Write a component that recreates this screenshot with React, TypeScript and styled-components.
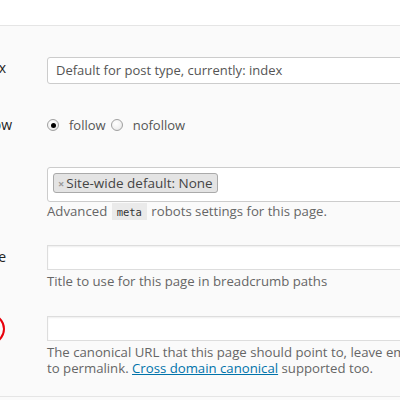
import React from "react";
import styled, { createGlobalStyle } from "styled-components";

const GlobalStyle = createGlobalStyle`
  html, body { margin: 0; padding: 0; }
  body {
    background: #fafafa;
    font-family: "Open Sans", "Noto Sans", sans-serif;
    color: #444;
    overflow: hidden;
  }
`;

const Page = styled.div`
  width: 400px;
  height: 400px;
  overflow: hidden;
  position: relative;
  background: #fafafa;
`;

const TopBar = styled.div`
  height: 25px;
  background: #fff;
  border-bottom: 1px solid #e5e5e5;
`;

const Table = styled.div`
  display: flex;
  flex-direction: column;
  padding-top: 31px;
  height: 339px;
  border-bottom: 1px solid #e5e5e5;
`;

const Row = styled.div<{ $mt?: number }>`
  display: grid;
  grid-template-columns: 47px 1fr;
  margin-top: ${(p) => p.$mt ?? 0}px;
  position: relative;
`;

const LabelCell = styled.div`
  position: relative;
  overflow: visible;
`;

const Label = styled.label<{ $end: number; $top: number }>`
  display: block;
  width: 200px;
  margin-left: ${(p) => p.$end - 200}px;
  margin-top: ${(p) => p.$top}px;
  text-align: right;
  white-space: nowrap;
  font-size: 14px;
  font-weight: 400;
  color: #222;
  line-height: 18px;
`;

const Field = styled.div`
  display: flex;
  flex-direction: column;
  min-width: 0;
`;

const Select = styled.div`
  box-sizing: border-box;
  width: 420px;
  height: 27px;
  border: 1px solid #ccc;
  border-radius: 3px;
  background: #fff;
  padding: 0 8px;
  font-size: 13px;
  line-height: 25px;
  color: #555;
  white-space: nowrap;
`;

const RadioGroup = styled.div`
  display: flex;
  align-items: center;
  height: 20px;
  font-size: 13px;
  color: #555;
`;

const Radio = styled.span<{ $checked?: boolean }>`
  box-sizing: border-box;
  width: 12px;
  height: 12px;
  border-radius: 50%;
  border: 1px solid #a0a0a0;
  background: radial-gradient(circle at 40% 35%, #fff 0%, #f0f0f0 60%, #d8d8d8 100%);
  display: inline-flex;
  align-items: center;
  justify-content: center;
  margin-right: 10px;
  &::after {
    content: "";
    display: ${(p) => (p.$checked ? "block" : "none")};
    width: 5px;
    height: 5px;
    border-radius: 50%;
    background: #000;
  }
`;

const RadioLabel = styled.span`
  margin-right: 5px;
`;

const MultiBox = styled.div`
  box-sizing: border-box;
  width: 420px;
  height: 35px;
  border: 1px solid #ccc;
  border-radius: 3px;
  background: #fff;
  padding: 5px 5px;
  display: flex;
  align-items: flex-start;
`;

const Tag = styled.span`
  box-sizing: border-box;
  display: inline-flex;
  align-items: center;
  height: 20px;
  padding: 0 4px 0 4px;
  border: 1px solid #aaa;
  border-radius: 3px;
  background: #e4e4e4;
  font-size: 13.5px;
  color: #444;
  white-space: nowrap;
`;

const TagX = styled.span`
  color: #999;
  font-size: 11px;
  font-weight: 700;
  margin-right: 2px;
`;

const Desc = styled.p<{ $mt?: number }>`
  margin: ${(p) => p.$mt ?? 2}px 0 0;
  font-size: 13.2px;
  line-height: 16px;
  color: #666;
  white-space: nowrap;
`;

const Code = styled.code`
  font-family: "DejaVu Sans Mono", "Liberation Mono", monospace;
  font-size: 10.5px;
  background: #eaeaea;
  padding: 3px 5px 2px;
  margin: 0 1px;
  color: #333;
`;

const TextInput = styled.div`
  box-sizing: border-box;
  width: 420px;
  height: 25px;
  border: 1px solid #ddd;
  background: #fff;
  box-shadow: inset 0 1px 2px rgba(0, 0, 0, 0.07);
`;

const Link = styled.a`
  color: #0073aa;
  text-decoration: underline;
`;

const Circle = styled.svg`
  position: absolute;
  left: -40px;
  top: -7px;
  overflow: visible;
`;

export default function App() {
  return (
    <>
      <GlobalStyle />
      <Page>
        <TopBar />
        <Table>
          <Row>
            <LabelCell>
              <Label $end={6} $top={2}>Meta robots index</Label>
            </LabelCell>
            <Field>
              <Select>Default for post type, currently: index</Select>
            </Field>
          </Row>
          <Row $mt={31}>
            <LabelCell>
              <Label $end={12} $top={1}>Meta robots follow</Label>
            </LabelCell>
            <Field>
              <RadioGroup>
                <Radio $checked />
                <RadioLabel>follow</RadioLabel>
                <Radio />
                <span>nofollow</span>
              </RadioGroup>
            </Field>
          </Row>
          <Row $mt={32}>
            <LabelCell />
            <Field>
              <MultiBox>
                <Tag>
                  <TagX>×</TagX>Site-wide default: None
                </Tag>
              </MultiBox>
              <Desc $mt={1}>
                Advanced <Code>meta</Code> robots settings for this page.
              </Desc>
            </Field>
          </Row>
          <Row $mt={25}>
            <LabelCell>
              <Label $end={6} $top={3}>Breadcrumbs Title</Label>
            </LabelCell>
            <Field>
              <TextInput />
              <Desc $mt={3}>Title to use for this page in breadcrumb paths</Desc>
            </Field>
          </Row>
          <Row $mt={27}>
            <LabelCell>
              <Circle width="46" height="40" viewBox="0 0 46 40">
                <ellipse cx="23" cy="20" rx="21" ry="17" fill="none" stroke="#e8000b" strokeWidth="2" />
              </Circle>
            </LabelCell>
            <Field>
              <TextInput />
              <Desc $mt={3}>
                The canonical URL that this page should point to, leave empty to default
                <br />
                to permalink. <Link>Cross domain canonical</Link> supported too.
              </Desc>
            </Field>
          </Row>
        </Table>
      </Page>
    </>
  );
}
